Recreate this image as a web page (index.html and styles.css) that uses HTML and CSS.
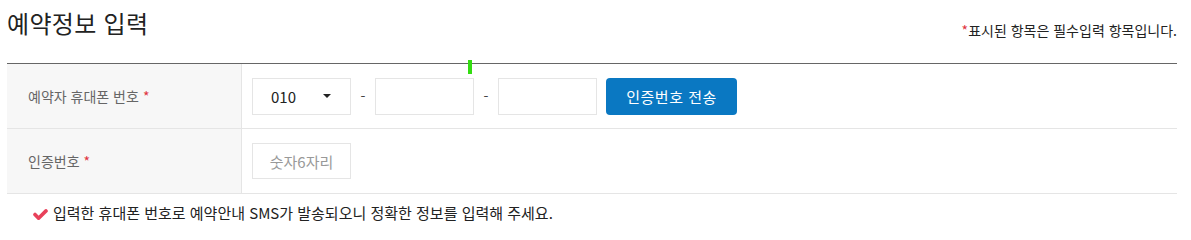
FILE: index.html
```html
<!DOCTYPE html>
<html lang="ko">
<head>
<meta charset="utf-8">
<title>예약정보 입력</title>
<link rel="stylesheet" href="styles.css">
</head>
<body>
<div class="page">
  <div class="header">
    <h2 class="title">예약정보 입력</h2>
    <p class="req-note"><span class="star">*</span>표시된 항목은 필수입력 항목입니다.</p>
  </div>
  <div class="form-table">
    <span class="marker"></span>
    <div class="row">
      <div class="label">예약자 휴대폰 번호 <span class="star">*</span></div>
      <div class="value">
        <div class="select"><span>010</span><svg class="caret" width="8" height="4" viewBox="0 0 8 4"><path d="M0 0H8L4 4Z" fill="#222"/></svg></div>
        <span class="dash">-</span>
        <input class="box" type="text">
        <span class="dash">-</span>
        <input class="box" type="text">
        <button class="btn" type="button">인증번호 전송</button>
      </div>
    </div>
    <div class="row">
      <div class="label">인증번호 <span class="star">*</span></div>
      <div class="value">
        <input class="box code" type="text" placeholder="숫자6자리">
      </div>
    </div>
  </div>
  <p class="notice">
    <svg class="check" width="15" height="12" viewBox="0 0 15 12"><path d="M2 5.5L5.6 9.2L13 1.9" fill="none" stroke="#e8415a" stroke-width="3.6" stroke-linecap="round" stroke-linejoin="round"/></svg>
    <span>입력한 휴대폰 번호로 예약안내 SMS가 발송되오니 정확한 정보를 입력해 주세요.</span>
  </p>
</div>
</body>
</html>
```
FILE: styles.css
```css
* { box-sizing: border-box; }
html, body { margin: 0; padding: 0; background: #fff; }
body {
  font-family: "Noto Sans CJK KR", "Noto Sans", sans-serif;
  color: #222;
}
.page {
  padding: 0 14px 0 7px;
}
.header {
  height: 63px;
  display: flex;
  justify-content: space-between;
  align-items: flex-start;
}
.title {
  margin: 10px 0 0 0;
  font-size: 24px;
  line-height: 26px;
  font-weight: 400;
  color: #222;
  letter-spacing: 0.3px;
}
.req-note {
  margin: 22px 0 0 0;
  font-size: 14px;
  line-height: 16px;
  color: #222;
  letter-spacing: 0;
}
.star { color: #e0333e; }
.form-table {
  position: relative;
  border-top: 1px solid #666;
}
.marker {
  position: absolute;
  left: 461px;
  top: -4px;
  width: 4px;
  height: 14px;
  background: #33dd11;
}
.row {
  display: grid;
  grid-template-columns: 235px 1fr;
  height: 65px;
  border-bottom: 1px solid #e5e5e5;
}
.label {
  background: #f7f7f7;
  border-right: 1px solid #e5e5e5;
  display: flex;
  align-items: center;
  padding-left: 21px;
  font-size: 14px;
  color: #666;
  letter-spacing: 0;
}
.label .star { margin-left: 4px; }
.value {
  display: flex;
  align-items: center;
  padding-left: 10px;
}
.select {
  width: 99px;
  height: 37px;
  border: 1px solid #e5e5e5;
  display: flex;
  align-items: center;
  justify-content: space-between;
  padding: 0 19px 0 18px;
  font-size: 15px;
  color: #222;
}
.caret { display: block; }
.dash {
  width: 24px;
  text-align: center;
  font-size: 14px;
  color: #444;
}
.box {
  width: 99px;
  height: 37px;
  border: 1px solid #e5e5e5;
  padding: 0 10px;
  font-family: inherit;
  font-size: 15px;
  color: #222;
  outline: none;
}
.code {
  text-align: center;
  height: 36px;
}
.code::placeholder { color: #999; }
.btn {
  margin-left: 9px;
  width: 131px;
  height: 37px;
  border: 0;
  border-radius: 4px;
  background: #0a78c2;
  color: #fff;
  font-family: inherit;
  font-size: 15px;
  letter-spacing: 0.5px;
  cursor: pointer;
}
.notice {
  margin: 0;
  padding: 8px 0 0 26px;
  display: flex;
  align-items: center;
  font-size: 15px;
  line-height: 22px;
  color: #222;
  letter-spacing: 0;
}
.check {
  display: block;
  margin: 3px 5px 0 0;
}
```
